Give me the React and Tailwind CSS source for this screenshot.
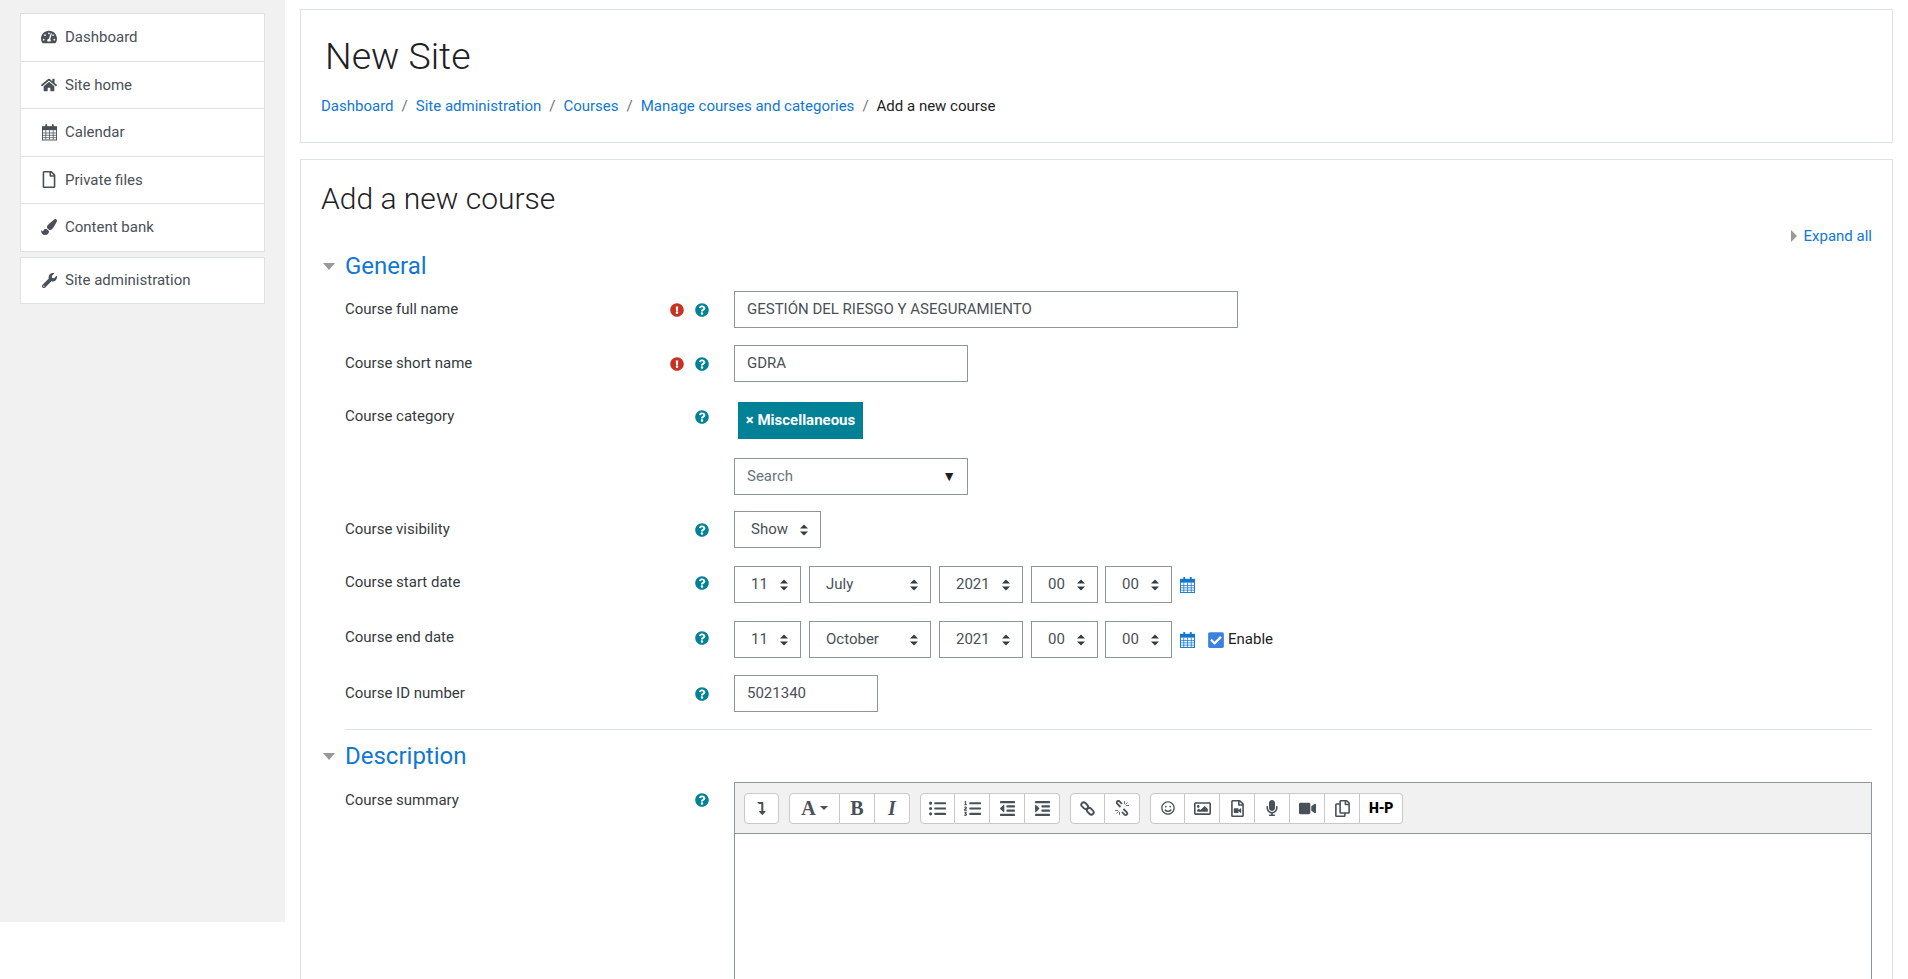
import React from 'react'
import {
  FaTachometerAlt, FaHome, FaRegFile, FaPaintBrush, FaWrench, FaExclamationCircle, FaQuestionCircle,
  FaCheckSquare, FaLevelDownAlt, FaListUl, FaListOl, FaOutdent, FaIndent, FaRegSmile,
  FaRegImage, FaRegFileVideo, FaMicrophone, FaVideo, FaRegCopy,
} from 'react-icons/fa'

function CalendarIcon({ className }) {
  return (
    <svg viewBox="0 0 16 17" className={className} fill="none" stroke="currentColor">
      <rect x="0.5" y="2.5" width="15" height="14" strokeWidth="1" />
      <path d="M0 2h16v4H0z" fill="currentColor" stroke="none" />
      <path d="M0.5 9h15M0.5 11.5h15M0.5 14h15M4 6v10M8 6v10M12 6v10" strokeWidth="0.8" />
      <path d="M4.5 0.5v3M11.5 0.5v3" strokeWidth="2" strokeLinecap="round" />
    </svg>
  )
}

function LinkIcon() {
  return (
    <svg viewBox="0 0 16 16" className="w-[15px] h-[15px]" fill="none" stroke="currentColor" strokeWidth="2">
      <rect x="1" y="2.5" width="8" height="5" rx="2.5" transform="rotate(45 5 5)" />
      <rect x="7" y="8.5" width="8" height="5" rx="2.5" transform="rotate(45 11 11)" />
    </svg>
  )
}

function UnlinkIcon() {
  return (
    <svg viewBox="0 0 16 16" className="w-[16px] h-[16px]" fill="none" stroke="currentColor">
      <path d="M6.5 7 3.2 3.7a1.6 1.6 0 0 1 2.3-2.3L8 4" strokeWidth="1.8" />
      <path d="M9.5 9l3.3 3.3a1.6 1.6 0 0 1-2.3 2.3L8 12" strokeWidth="1.8" />
      <path d="M10.5 1v3M15 5.5h-3M13.5 2.5l-2 2M1 10.5h3M5.5 15v-3M2.5 13.5l2-2" strokeWidth="0.8" />
    </svg>
  )
}

function SelectArrows() {
  return (
    <svg viewBox="0 0 8 12" className="w-2 h-3 shrink-0 text-[#343a40]" fill="currentColor">
      <path d="M4 0.5 8 4.5H0zM4 11.5 0 7.5h8z" />
    </svg>
  )
}

function Triangle() {
  return (
    <svg viewBox="0 0 12 7" className="w-3 h-[7px] text-[#999]" fill="currentColor">
      <path d="M0 0h12L6 7z" />
    </svg>
  )
}

function NavItem({ icon, label, last, height = 'h-[47.5px]' }) {
  return (
    <div className={`flex items-center ${height} pl-[20px] gap-2 ${last ? '' : 'border-b border-[#dee2e6]'}`}>
      <span className="w-4 flex justify-center">{icon}</span>
      <span>{label}</span>
    </div>
  )
}

function HelpIcons({ required }) {
  return (
    <div className="flex items-center gap-[11px] w-[39px] justify-end">
      {required && <FaExclamationCircle className="text-[14px] text-[#ca3120]" />}
      <FaQuestionCircle className="text-[14px] text-[#008196]" />
    </div>
  )
}

function Row({ label, required, labelOffset = '', className = '', children }) {
  return (
    <div className={`flex ${className}`}>
      <div className={`w-[389px] pr-[25px] flex items-center justify-between h-[37px] ${labelOffset}`}>
        <span className="text-[#343a40]">{label}</span>
        <HelpIcons required={required} />
      </div>
      {children}
    </div>
  )
}

function TextBox({ value, width, muted }) {
  return (
    <div className={`${width} h-[37px] border border-[#8f959e] pl-[12px] flex items-center ${muted ? 'text-[#6a737b]' : 'text-[#495057]'}`}>
      {value}
    </div>
  )
}

function Select({ value, width }) {
  return (
    <div className={`${width} h-[37px] border border-[#8f959e] pl-4 pr-3 flex items-center justify-between text-[#495057]`}>
      <span>{value}</span>
      <SelectArrows />
    </div>
  )
}

function DateFields({ month }) {
  return (
    <div className="flex items-center">
      <Select value="11" width="w-[67px]" />
      <Select value={month} width="w-[122px] ml-2" />
      <Select value="2021" width="w-[84px] ml-2" />
      <Select value="00" width="w-[67px] ml-2" />
      <Select value="00" width="w-[67px] ml-[7px]" />
      <CalendarIcon className="w-[15px] h-[16px] ml-2 text-[#1177d1]" />
    </div>
  )
}

function ToolButton({ width = 'w-[35px]', children }) {
  return (
    <div className={`${width} h-full flex items-center justify-center bg-white border-y border-r border-[#c8c8c8] first:border-l first:rounded-l-[4px] last:rounded-r-[4px] text-[#495057]`}>
      {children}
    </div>
  )
}

function ToolGroup({ children }) {
  return <div className="flex h-[31px]">{children}</div>
}

export default function App() {
  return (
    <div className="flex h-[979px] overflow-hidden bg-white text-[15px] font-['Roboto',sans-serif]">
      {/* Sidebar */}
      <aside className="w-[285px] h-[922px] shrink-0 bg-[#f1f1f1] pl-5 pr-5 pt-[13px] text-[#495057]">
        <div className="bg-white border border-[#dee2e6]">
          <NavItem icon={<FaTachometerAlt className="text-[16px]" />} label="Dashboard" />
          <NavItem icon={<FaHome className="text-[16px]" />} label="Site home" />
          <NavItem icon={<CalendarIcon className="w-[15px] h-[17px]" />} label="Calendar" />
          <NavItem icon={<FaRegFile className="text-[17px]" />} label="Private files" />
          <NavItem icon={<FaPaintBrush className="text-[16px]" />} label="Content bank" last height="h-[46.5px]" />
        </div>
        <div className="mt-[5px] bg-white border border-[#dee2e6]">
          <NavItem icon={<FaWrench className="text-[15px]" />} label="Site administration" last height="h-[45px]" />
        </div>
      </aside>

      {/* Main */}
      <main className="ml-[15px] w-[1593px] pt-[9px] shrink-0">
        <header className="h-[134px] border border-[#dee2e6] pl-5 pt-[25px]">
          <h1 className="pl-[4px] text-[37.5px] leading-[42px] font-light text-[#1d2125]">New Site</h1>
          <nav className="mt-[18px] flex items-center text-[#1177d1]">
            <span>Dashboard</span>
            <span className="px-2 text-[#6a737b]">/</span>
            <span>Site administration</span>
            <span className="px-2 text-[#6a737b]">/</span>
            <span>Courses</span>
            <span className="px-2 text-[#6a737b]">/</span>
            <span>Manage courses and categories</span>
            <span className="px-2 text-[#6a737b]">/</span>
            <span className="text-[#1d2125]">Add a new course</span>
          </nav>
        </header>

        <section className="mt-4 h-[1000px] border border-[#dee2e6] pl-5 pr-5">
          <h2 className="pt-[21px] text-[30px] leading-[36px] font-light text-[#1d2125]">Add a new course</h2>

          <div className="flex justify-end items-center gap-[7px] h-[20px] mt-[9px] text-[#1177d1]">
            <svg viewBox="0 0 6 12" className="w-[6px] h-3 text-[#999]" fill="currentColor"><path d="M0 0l6 6-6 6z" /></svg>
            <span>Expand all</span>
          </div>

          <div className="flex items-center h-[30px] mt-[5px]">
            <span className="w-6 pl-[2px]"><Triangle /></span>
            <h3 className="text-[24px] text-[#1177d1] leading-[30px]">General</h3>
          </div>

          <div className="pl-6 mt-[10px]">
            <Row label="Course full name" required>
              <TextBox value="GESTIÓN DEL RIESGO Y ASEGURAMIENTO" width="w-[504px]" />
            </Row>
            <Row label="Course short name" required className="mt-[17px]">
              <TextBox value="GDRA" width="w-[234px]" />
            </Row>
            <Row label="Course category" className="mt-[20px]" labelOffset="-mt-[4px]">
              <div className="ml-1 h-[37px] w-[125px] bg-[#008196] text-white text-[15px] font-bold flex items-center justify-center">
                × Miscellaneous
              </div>
            </Row>
            <div className="flex mt-[19px]">
              <div className="w-[389px]" />
              <div className="w-[234px] h-[37px] border border-[#8f959e] pl-[12px] pr-[11px] flex items-center justify-between text-[#6a737b]">
                <span>Search</span>
                <span className="text-[#1d2125] text-[14px]">▼</span>
              </div>
            </div>
            <Row label="Course visibility" className="mt-[16px]">
              <Select value="Show" width="w-[87px]" />
            </Row>
            <Row label="Course start date" className="mt-[18px]" labelOffset="-mt-[2px]">
              <DateFields month="July" />
            </Row>
            <Row label="Course end date" className="mt-[18px]" labelOffset="-mt-[2px]">
              <DateFields month="October" />
              <div className="flex items-center ml-[13px] gap-[4px] text-[#1d2125]">
                <span className="relative w-4 h-4 flex items-center justify-center">
                  <span className="absolute inset-[2px] bg-white" />
                  <FaCheckSquare className="relative text-[18px] text-[#3b82e0]" />
                </span>
                <span>Enable</span>
              </div>
            </Row>
            <Row label="Course ID number" className="mt-[17px]">
              <TextBox value="5021340" width="w-[144px]" />
            </Row>
            <div className="mt-[17px] border-t border-[#dee2e6]" />
          </div>

          <div className="flex items-center h-[30px] mt-[11px]">
            <span className="w-6 pl-[2px]"><Triangle /></span>
            <h3 className="text-[24px] text-[#1177d1] leading-[30px]">Description</h3>
          </div>

          <div className="pl-6 mt-[11px] flex">
            <div className="w-[389px] pr-[25px] pt-[7px] flex justify-between h-[37px]">
              <span className="text-[#343a40]">Course summary</span>
              <span className="pt-[4px]"><HelpIcons /></span>
            </div>
            <div className="w-[1138px] border border-[#8f959e] h-[400px]">
              <div className="h-[51px] bg-[#f1f1f1] border-b border-[#8f959e] pl-[9px] flex items-center gap-[10px]">
                <ToolGroup>
                  <ToolButton><FaLevelDownAlt className="text-[13px]" /></ToolButton>
                </ToolGroup>
                <ToolGroup>
                  <ToolButton width="w-[51px]">
                    <span className="flex items-center gap-[4px] font-['Liberation_Serif',serif] font-bold text-[20px]">
                      A
                      <svg viewBox="0 0 8 4" className="w-2 h-1" fill="currentColor"><path d="M0 0h8L4 4z" /></svg>
                    </span>
                  </ToolButton>
                  <ToolButton><span className="font-['Liberation_Serif',serif] font-bold text-[20px]">B</span></ToolButton>
                  <ToolButton><span className="font-['Liberation_Serif',serif] italic font-bold text-[20px]">I</span></ToolButton>
                </ToolGroup>
                <ToolGroup>
                  <ToolButton><FaListUl className="text-[17px]" /></ToolButton>
                  <ToolButton><FaListOl className="text-[17px]" /></ToolButton>
                  <ToolButton><FaOutdent className="text-[17px]" /></ToolButton>
                  <ToolButton><FaIndent className="text-[17px]" /></ToolButton>
                </ToolGroup>
                <ToolGroup>
                  <ToolButton><LinkIcon /></ToolButton>
                  <ToolButton><UnlinkIcon /></ToolButton>
                </ToolGroup>
                <ToolGroup>
                  <ToolButton><FaRegSmile className="text-[14px]" /></ToolButton>
                  <ToolButton><FaRegImage className="text-[17px]" /></ToolButton>
                  <ToolButton><FaRegFileVideo className="text-[17px]" /></ToolButton>
                  <ToolButton><FaMicrophone className="text-[16px]" /></ToolButton>
                  <ToolButton><FaVideo className="text-[17px]" /></ToolButton>
                  <ToolButton><FaRegCopy className="text-[17px]" /></ToolButton>
                  <ToolButton width="w-[43px]"><span className="font-black text-[14px] text-black tracking-tight">H-P</span></ToolButton>
                </ToolGroup>
              </div>
            </div>
          </div>
        </section>
      </main>
    </div>
  )
}
